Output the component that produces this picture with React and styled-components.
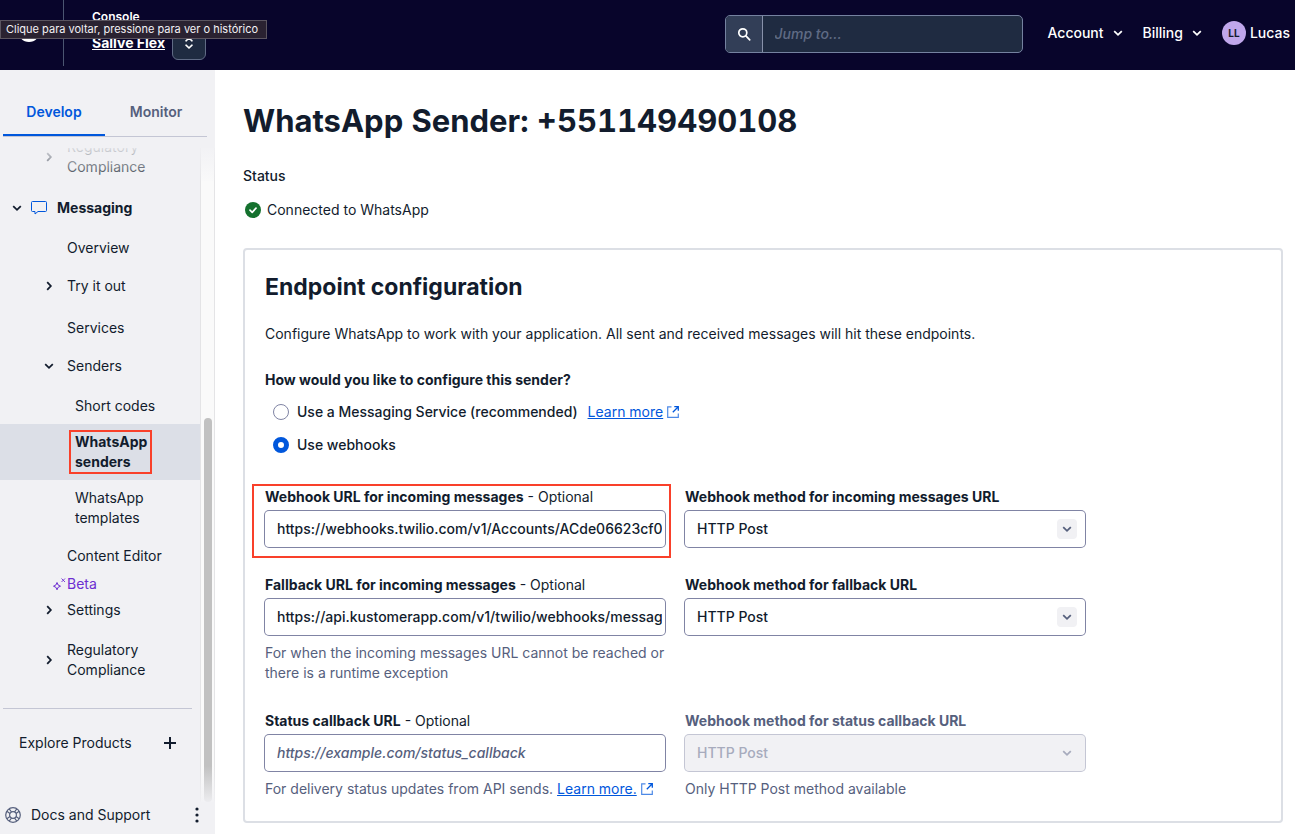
import React from 'react';
import styled, { createGlobalStyle, css } from 'styled-components';

const GlobalStyle = createGlobalStyle`
  * {
    box-sizing: border-box;
  }

  body {
    margin: 0;
    color: #121c2d;
    background: #ffffff;
    font-family: Inter, "Liberation Sans", sans-serif;
    font-size: 14px;
    line-height: 20px;
  }

  button,
  input,
  select {
    font: inherit;
    color: inherit;
  }

  h1, h2, p, ul {
    margin: 0;
    padding: 0;
  }

  svg {
    display: block;
    flex: none;
  }
`;

/* ---------- icons ---------- */

const chevrons = {
  down: 'M1.2 3.2 5 6.8l3.8-3.6',
  right: 'M3.2 1.2 6.8 5 3.2 8.8',
};

const Chevron = ({ to = 'down' }) => (
  <svg width="10" height="10" viewBox="0 0 10 10" fill="none" stroke="currentColor" strokeWidth="1.8" aria-hidden="true">
    <path d={chevrons[to]} />
  </svg>
);

const SwitchIcon = () => (
  <svg width="10" height="14" viewBox="0 0 10 14" fill="none" stroke="currentColor" strokeWidth="1.6" strokeLinecap="round" aria-hidden="true">
    <path d="M2 4.8 5 2l3 2.8M2 9.2 5 12l3-2.8" />
  </svg>
);

const SearchIcon = () => (
  <svg width="14" height="14" viewBox="0 0 14 14" fill="none" stroke="currentColor" strokeWidth="1.7" strokeLinecap="round" aria-hidden="true">
    <circle cx="5.8" cy="5.8" r="4" />
    <path d="m8.9 8.9 3.8 3.9" />
  </svg>
);

const LogoIcon = () => (
  <svg width="22" height="22" viewBox="0 0 24 24" fill="none" aria-hidden="true">
    <circle cx="12" cy="12" r="10.4" stroke="#ffffff" strokeWidth="3.2" />
    <circle cx="8.8" cy="8.8" r="2.3" fill="#ffffff" />
    <circle cx="15.2" cy="8.8" r="2.3" fill="#ffffff" />
    <circle cx="8.8" cy="15.2" r="2.3" fill="#ffffff" />
    <circle cx="15.2" cy="15.2" r="2.3" fill="#ffffff" />
  </svg>
);

const MessageIcon = () => (
  <svg width="16" height="14" viewBox="0 0 16 14" fill="none" stroke="#0057dc" aria-hidden="true">
    <path d="M1.5.5h13q1 0 1 1v8q0 1-1 1H7L4 13v-2.5H1.5q-1 0-1-1v-8q0-1 1-1Z" strokeLinejoin="round" />
  </svg>
);

const SparkleIcon = () => (
  <svg width="13" height="14" viewBox="0 0 13 14" fill="none" stroke="#6d2ed1" aria-hidden="true">
    <path d="M4 5.500 5.100 8 7.500 9.200 5.100 10.300 4 12.800 2.900 10.300.500 9.200 2.900 8Z" strokeLinejoin="round" />
    <path d="m8.500 1.500 3.500 3.500m0-3.500L8.500 5" strokeWidth=".9" />
  </svg>
);

const PlusIcon = () => (
  <svg width="12" height="12" viewBox="0 0 12 12" stroke="currentColor" strokeWidth="2" aria-hidden="true">
    <path d="M6 0v12M0 6h12" />
  </svg>
);

const SupportIcon = () => (
  <svg width="16" height="16" viewBox="0 0 16 16" fill="none" stroke="#56607d" strokeWidth="1.2" aria-hidden="true">
    <circle cx="8" cy="8" r="7.3" />
    <circle cx="8" cy="8" r="3.4" />
    <path d="M4.2 1.800 6.500 5M1.800 4.200 5 6.500M11.800 1.800 9.500 5M14.200 4.200 11 6.500M4.200 14.200 6.500 11M1.800 11.800 5 9.500M11.800 14.200 9.500 11M14.200 11.800 11 9.500" />
  </svg>
);

const MoreIcon = () => (
  <svg width="4" height="16" viewBox="0 0 4 16" fill="currentColor" aria-hidden="true">
    <circle cx="2" cy="2" r="1.6" />
    <circle cx="2" cy="8" r="1.6" />
    <circle cx="2" cy="14" r="1.6" />
  </svg>
);

const SuccessIcon = () => (
  <svg width="16" height="16" viewBox="0 0 16 16" fill="none" aria-hidden="true">
    <circle cx="8" cy="8" r="8" fill="#14712e" />
    <path d="m5 8.200 2.200 2.100L11 6.200" stroke="#ffffff" strokeWidth="1.7" strokeLinecap="round" strokeLinejoin="round" />
  </svg>
);

const ExternalIcon = () => (
  <svg width="12" height="12" viewBox="0 0 12 12" fill="none" stroke="#0057dc" aria-hidden="true">
    <path d="M4.500.800H.700v10.500h10.600V7.500" opacity=".7" strokeWidth="1.2" />
    <path d="M7.300.700h4v4M11 1 5.800 6.200" strokeWidth="1.3" />
  </svg>
);

/* ---------- top bar ---------- */

const Page = styled.div`
  display: flex;
  flex-direction: column;
  height: 100vh;
`;

const TopBar = styled.header`
  position: relative;
  display: flex;
  align-items: center;
  flex: none;
  height: 70px;
  padding: 0 5px 4px 18px;
  color: #ffffff;
  background: #08052b;
`;

const LogoLink = styled.a`
  display: flex;
  align-items: center;
  align-self: stretch;
  padding: 0 23px 4px 0;
  border-right: 1px solid #4b5671;
`;

const AccountBlock = styled.div`
  display: flex;
  align-items: flex-end;
  gap: 7px;
  padding-left: 28px;
`;

const AccountNames = styled.div`
  display: flex;
  flex-direction: column;
  padding-bottom: 7px;
`;

const ProductName = styled.span`
  font-size: 12px;
  font-weight: 600;
`;

const AccountName = styled.a`
  padding-top: 6px;
  color: #ffffff;
  font-weight: 700;
`;

const SwitchButton = styled.button`
  display: flex;
  align-items: center;
  justify-content: center;
  width: 34px;
  height: 34px;
  padding: 0;
  color: #ffffff;
  background: #1f2b41;
  border: 1px solid #606b85;
  border-radius: 6px;
`;

const Tooltip = styled.div`
  position: absolute;
  top: 20px;
  left: 0;
  height: 19px;
  padding: 0 8px 0 5px;
  color: #f3f1f5;
  background: #2a2231;
  border: 1px solid #5b5560;
  font-size: 11px;
  line-height: 17px;
  white-space: nowrap;
`;

const Search = styled.form`
  display: flex;
  width: 298px;
  height: 38px;
  margin-left: auto;
  margin-top: 2px;
  overflow: hidden;
  background: #1f2b41;
  border: 1px solid #7582a0;
  border-radius: 5px;
`;

const SearchButton = styled.button`
  display: flex;
  align-items: center;
  justify-content: center;
  width: 37px;
  padding: 0;
  color: #ffffff;
  background: #323e57;
  border: 0;
  border-right: 1px solid #8891aa;
`;

const SearchInput = styled.input`
  flex: 1;
  min-width: 0;
  padding: 0 12px;
  background: transparent;
  border: 0;
  font-weight: 500;

  &::placeholder {
    color: #606b85;
    font-style: italic;
    opacity: 1;
  }
`;

const TopMenu = styled.nav`
  display: flex;
  align-items: center;
  gap: 20px;
  padding-left: 25px;
`;

const MenuButton = styled.button`
  display: flex;
  align-items: center;
  gap: 9px;
  padding: 0;
  color: #ffffff;
  background: none;
  border: 0;
  font-weight: 500;
`;

const UserButton = styled(MenuButton)`
  gap: 4px;
`;

const Avatar = styled.span`
  display: flex;
  align-items: center;
  justify-content: center;
  width: 24px;
  height: 24px;
  color: #121c2d;
  background: #c0a7eb;
  border-radius: 50%;
  font-size: 10px;
  font-weight: 700;
`;

/* ---------- sidebar ---------- */

const Body = styled.div`
  display: flex;
  flex: 1;
  min-height: 0;
`;

const Sidebar = styled.aside`
  display: flex;
  flex: none;
  flex-direction: column;
  width: 215px;
  background: #f1f1f4;
`;

const Tabs = styled.div`
  display: grid;
  grid-template-columns: 1fr 1fr;
  flex: none;
  height: 67px;
  margin: 0 8px 0 3px;
  border-bottom: 1px solid #c4c6d4;
`;

const Tab = styled.button`
  padding: 20px 0 0;
  color: ${({ $active }) => ($active ? '#0057dc' : '#56607d')};
  background: none;
  border: 0;
  border-bottom: 2px solid ${({ $active }) => ($active ? '#0057dc' : 'transparent')};
  font-weight: 600;
`;

const ScrollArea = styled.div`
  position: relative;
  display: flex;
  flex: 1;
  min-height: 0;
  overflow: hidden;

  &::before,
  &::after {
    content: '';
    position: absolute;
    left: 0;
    right: 0;
    pointer-events: none;
  }

  &::before {
    top: 0;
    height: 44px;
    background: linear-gradient(#f1f1f4 11px, rgba(241, 241, 244, 0.9) 11px, rgba(241, 241, 244, 0.1));
  }

  &::after {
    bottom: 0;
    height: 36px;
    background: linear-gradient(rgba(241, 241, 244, 0), rgba(241, 241, 244, 0.9));
  }
`;

const NavList = styled.ul`
  flex: 1;
  list-style: none;
`;

const ScrollTrack = styled.div`
  display: flex;
  flex-direction: column;
  align-items: center;
  width: 15px;
  background: #fafafa;
  border: solid #e4e4e6;
  border-width: 0 1px;

  &::before {
    content: '';
    flex: 281;
  }
`;

const ScrollThumb = styled.div`
  flex: 384;
  width: 8px;
  background: #c1c1c1;
  border-radius: 4px;
`;

const NavItem = styled.li`
  margin-bottom: ${({ $after = 0 }) => $after}px;
  background: ${({ $selected }) => ($selected ? '#dcdfe7' : 'transparent')};
`;

const NavLink = styled.a`
  display: block;
  width: ${({ $deep }) => ($deep ? '160px' : '180px')};
  padding: 8px 0 8px ${({ $deep }) => ($deep ? '75px' : '67px')};
  color: #121c2d;
  text-decoration: none;

  ${({ $selected }) => $selected && css`
    font-weight: 700;
  `}
`;

const Marked = styled.span`
  position: relative;
  display: block;

  &::after {
    content: '';
    position: absolute;
    top: -2px;
    bottom: -2px;
    left: -6px;
    width: 79px;
    border: 2px solid #f9402a;
  }
`;

const NavToggle = styled.button`
  display: flex;
  align-items: center;
  gap: 13px;
  width: 180px;
  padding: ${({ $flush }) => ($flush ? '0' : '6px 0')};
  padding-left: 44px;
  background: none;
  border: 0;
  text-align: left;
`;

const ProductToggle = styled.button`
  display: flex;
  align-items: center;
  height: 40px;
  padding: 0 0 0 12px;
  gap: 9px;
  background: none;
  border: 0;
  font-weight: 700;

  span {
    padding-left: 1px;
  }
`;

const Beta = styled.div`
  display: flex;
  align-items: center;
  gap: 1px;
  padding-left: 53px;
  color: #6d2ed1;
`;

const Explore = styled.button`
  display: flex;
  align-items: center;
  justify-content: space-between;
  width: 189px;
  margin: 22px 0 0 3px;
  padding: 24px 16px;
  background: none;
  border: 0;
  border-top: 1px solid #c4c6d4;
`;

const SidebarFooter = styled.div`
  display: flex;
  align-items: center;
  justify-content: space-between;
  flex: none;
  padding: 3px 16px 9px 5px;
`;

const DocsLink = styled.a`
  display: flex;
  align-items: center;
  gap: 10px;
  color: #121c2d;
  text-decoration: none;
`;

const IconButton = styled.button`
  padding: 0;
  background: none;
  border: 0;
`;

/* ---------- main content ---------- */

const Main = styled.main`
  flex: 1;
  min-width: 0;
  padding: 31px 12px 11px 28px;
  overflow: hidden;
`;

const Title = styled.h1`
  font-size: 31px;
  font-weight: 700;
  font-variant-numeric: tabular-nums;
  line-height: 40px;
`;

const StatusLabel = styled.p`
  margin-top: 25px;
  font-weight: 500;
`;

const StatusValue = styled.p`
  display: flex;
  align-items: center;
  gap: 6px;
  margin: 14px 0 28px;
  padding-left: 2px;
`;

const Card = styled.section`
  padding: 23px 20px 22px;
  border: 2px solid #dcdfe5;
  border-radius: 4px;
`;

const CardTitle = styled.h2`
  font-size: 23px;
  font-weight: 700;
  line-height: 28px;
`;

const Description = styled.p`
  margin-top: 23px;
`;

const RadioGroup = styled.fieldset`
  display: flex;
  flex-direction: column;
  gap: 13px;
  margin: 26px 0 32px;
  padding: 0;
  border: 0;
`;

const Legend = styled.legend`
  margin-bottom: 12px;
  padding: 0;
  font-weight: 700;
`;

const RadioRow = styled.div`
  display: flex;
  align-items: center;
  gap: 10px;
  padding-left: 8px;
`;

const RadioLabel = styled.label`
  display: flex;
  align-items: center;
  gap: 8px;
  font-weight: 500;
`;

const Radio = styled.input`
  appearance: none;
  width: 16px;
  height: 16px;
  margin: 0;
  background: #ffffff;
  border: 1px solid #8084a4;
  border-radius: 50%;

  &:checked {
    border: 5px solid #0057dc;
  }
`;

const TextLink = styled.a`
  display: inline-flex;
  align-items: center;
  gap: 4px;
  color: #0057dc;
  text-decoration: none;

  span {
    text-decoration: underline;
  }
`;

const Fields = styled.div`
  display: grid;
  grid-template-columns: repeat(2, minmax(0, 400px));
  gap: 28px 20px;
`;

const FieldBox = styled.div`
  position: relative;

  ${({ $marked }) => $marked && css`
    &::after {
      content: '';
      position: absolute;
      inset: -3px -6px -11px -13px;
      border: 2px solid #f9402a;
      pointer-events: none;
    }
  `}
`;

const FieldLabel = styled.label`
  display: block;
  margin-bottom: 4px;
  color: ${({ $disabled }) => ($disabled ? '#56607d' : '#121c2d')};

  strong {
    font-weight: 700;
  }
`;

const control = css`
  display: block;
  width: 100%;
  height: 36px;
  background: #ffffff;
  border: 0;
  border-radius: 4px;
  box-shadow: 0 0 0 1px #8084a4;
  font-weight: 500;
`;

const TextInput = styled.input`
  ${control}
  padding: 0 3px 2px 12px;

  &::placeholder {
    color: #56607d;
    font-style: italic;
    opacity: 1;
  }
`;

const SelectWrapper = styled.div`
  position: relative;
`;

const Select = styled.select`
  ${control}
  padding: 0 12px;
  appearance: none;

  &:disabled {
    color: #a7abbd;
    background: #f1f1f4;
    box-shadow: 0 0 0 1px #c4c6d4;
    opacity: 1;
  }
`;

const SelectArrow = styled.span`
  position: absolute;
  top: 8px;
  right: 8px;
  display: flex;
  align-items: center;
  justify-content: center;
  width: 20px;
  height: 20px;
  color: ${({ $disabled }) => ($disabled ? '#a7abbd' : '#56607d')};
  background: #f1f1f4;
  border-radius: 4px;
  pointer-events: none;
`;

const HelpText = styled.p`
  margin-top: 8px;
  color: #56607d;
`;

const ExternalLink = ({ children }) => (
  <TextLink href="#learn-more">
    <span>{children}</span>
    <ExternalIcon />
  </TextLink>
);

const UrlField = ({ id, label, value, placeholder, help, marked }) => (
  <FieldBox $marked={marked}>
    <FieldLabel htmlFor={id}>
      <strong>{label}</strong> - Optional
    </FieldLabel>
    <TextInput id={id} type="text" defaultValue={value} placeholder={placeholder} />
    {help && <HelpText>{help}</HelpText>}
  </FieldBox>
);

const MethodField = ({ id, label, help, disabled }) => (
  <FieldBox>
    <FieldLabel htmlFor={id} $disabled={disabled}>
      <strong>{label}</strong>
    </FieldLabel>
    <SelectWrapper>
      <Select id={id} disabled={disabled}>
        <option>HTTP Post</option>
      </Select>
      <SelectArrow $disabled={disabled}>
        <Chevron />
      </SelectArrow>
    </SelectWrapper>
    {help && <HelpText>{help}</HelpText>}
  </FieldBox>
);

const Header = () => (
  <TopBar>
    <LogoLink href="#home" aria-label="Home">
      <LogoIcon />
    </LogoLink>
    <AccountBlock>
      <AccountNames>
        <ProductName>Console</ProductName>
        <AccountName href="#account">Sallve Flex</AccountName>
      </AccountNames>
      <SwitchButton type="button" aria-label="Switch account">
        <SwitchIcon />
      </SwitchButton>
    </AccountBlock>
    <Search role="search">
      <SearchButton type="button" aria-label="Search">
        <SearchIcon />
      </SearchButton>
      <SearchInput type="text" placeholder="Jump to..." aria-label="Jump to" />
    </Search>
    <TopMenu>
      <MenuButton type="button">Account <Chevron /></MenuButton>
      <MenuButton type="button">Billing <Chevron /></MenuButton>
      <UserButton type="button"><Avatar>LL</Avatar> Lucas</UserButton>
    </TopMenu>
    <Tooltip role="tooltip">Clique para voltar, pressione para ver o histórico</Tooltip>
  </TopBar>
);

const SideNav = () => (
  <Sidebar>
    <Tabs role="tablist">
      <Tab type="button" role="tab" aria-selected="true" $active>Develop</Tab>
      <Tab type="button" role="tab" aria-selected="false">Monitor</Tab>
    </Tabs>
    <ScrollArea>
      <NavList>
        <NavItem $after={11}>
          <NavToggle type="button" $flush><Chevron to="right" /> Regulatory<br />Compliance</NavToggle>
        </NavItem>
        <NavItem $after={2}>
          <ProductToggle type="button">
            <Chevron />
            <MessageIcon />
            <span>Messaging</span>
          </ProductToggle>
        </NavItem>
        <NavItem $after={4}><NavLink href="#overview">Overview</NavLink></NavItem>
        <NavItem $after={8}>
          <NavToggle type="button"><Chevron to="right" /> Try it out</NavToggle>
        </NavItem>
        <NavItem $after={4}><NavLink href="#services">Services</NavLink></NavItem>
        <NavItem $after={6}>
          <NavToggle type="button" aria-expanded="true"><Chevron /> Senders</NavToggle>
        </NavItem>
        <NavItem><NavLink href="#short-codes" $deep>Short codes</NavLink></NavItem>
        <NavItem $selected>
          <NavLink href="#senders" aria-current="page" $deep $selected>
            <Marked>WhatsApp senders</Marked>
          </NavLink>
        </NavItem>
        <NavItem $after={2}><NavLink href="#templates" $deep>WhatsApp templates</NavLink></NavItem>
        <NavItem>
          <NavLink href="#content-editor">Content Editor</NavLink>
          <Beta><SparkleIcon /> Beta</Beta>
        </NavItem>
        <NavItem $after={8}>
          <NavToggle type="button"><Chevron to="right" /> Settings</NavToggle>
        </NavItem>
        <NavItem>
          <NavToggle type="button"><Chevron to="right" /> <span>Regulatory Compliance</span></NavToggle>
        </NavItem>
        <li>
          <Explore type="button">Explore Products <PlusIcon /></Explore>
        </li>
      </NavList>
      <ScrollTrack>
        <ScrollThumb />
      </ScrollTrack>
    </ScrollArea>
    <SidebarFooter>
      <DocsLink href="#docs"><SupportIcon /> Docs and Support</DocsLink>
      <IconButton type="button" aria-label="More options"><MoreIcon /></IconButton>
    </SidebarFooter>
  </Sidebar>
);

const App = () => (
  <Page>
    <GlobalStyle />
    <Header />
    <Body>
      <SideNav />
      <Main>
        <Title>WhatsApp Sender: +551149490108</Title>
        <StatusLabel>Status</StatusLabel>
        <StatusValue><SuccessIcon /> Connected to WhatsApp</StatusValue>
        <Card>
          <CardTitle>Endpoint configuration</CardTitle>
          <Description>
            Configure WhatsApp to work with your application. All sent and received messages will hit these endpoints.
          </Description>
          <RadioGroup>
            <Legend>How would you like to configure this sender?</Legend>
            <RadioRow>
              <RadioLabel>
                <Radio type="radio" name="mode" value="service" />
                Use a Messaging Service (recommended)
              </RadioLabel>
              <ExternalLink>Learn more</ExternalLink>
            </RadioRow>
            <RadioRow>
              <RadioLabel>
                <Radio type="radio" name="mode" value="webhooks" defaultChecked />
                Use webhooks
              </RadioLabel>
            </RadioRow>
          </RadioGroup>
          <Fields>
            <UrlField
              id="incoming-url"
              label="Webhook URL for incoming messages"
              value="https://webhooks.twilio.com/v1/Accounts/ACde06623cf0"
              marked
            />
            <MethodField id="incoming-method" label="Webhook method for incoming messages URL" />
            <UrlField
              id="fallback-url"
              label="Fallback URL for incoming messages"
              value="https://api.kustomerapp.com/v1/twilio/webhooks/messag"
              help="For when the incoming messages URL cannot be reached or there is a runtime exception"
            />
            <MethodField id="fallback-method" label="Webhook method for fallback URL" />
            <UrlField
              id="status-url"
              label="Status callback URL"
              placeholder="https://example.com/status_callback"
              help={<>For delivery status updates from API sends. <ExternalLink>Learn more.</ExternalLink></>}
            />
            <MethodField
              id="status-method"
              label="Webhook method for status callback URL"
              help="Only HTTP Post method available"
              disabled
            />
          </Fields>
        </Card>
      </Main>
    </Body>
  </Page>
);

export default App;
